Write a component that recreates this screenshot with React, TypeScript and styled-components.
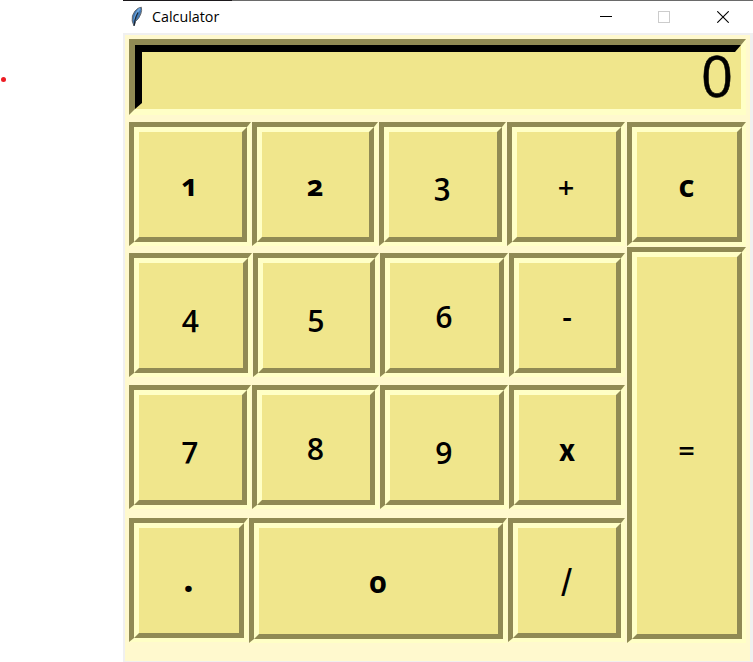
import React from 'react';
import styled, { createGlobalStyle } from 'styled-components';

const FACE = '#f0e68c';
const DARK = '#908a54';
const LIGHT = '#ffffc6';
const SHELL = '#fff9ce';

const GlobalStyle = createGlobalStyle`
  * { box-sizing: border-box; }
  body {
    margin: 0;
    background: #ffffff;
    color: #000000;
    font-family: "Open Sans", "Noto Sans", sans-serif;
    overflow: hidden;
  }
`;

const Page = styled.div`
  display: flex;
  width: 753px;
  height: 662px;
`;

const Margin = styled.div`
  width: 123px;
  padding: 77px 0 0 1px;
`;

const RedDot = styled.div`
  width: 5px;
  height: 5px;
  border-radius: 50%;
  background: #ed1c24;
`;

const Window = styled.div`
  display: flex;
  flex-direction: column;
  width: 630px;
  height: 662px;
`;

const TopEdge = styled.div`
  height: 1px;
  background: linear-gradient(to right, #1b181b 109px, #6a6a6a 109px);
`;

const TitleBar = styled.div`
  display: flex;
  align-items: center;
  height: 32px;
  padding: 0 24px 0 7px;
  background: #ffffff;
`;

const Title = styled.span`
  flex: 1;
  margin-left: 8px;
  font-family: "Open Sans", "Noto Sans", sans-serif;
  font-size: 14.3px;
  line-height: 20px;
`;

const Controls = styled.div`
  display: flex;
  align-items: center;
  gap: 46px;
`;

const Body = styled.div`
  display: flex;
  flex-direction: column;
  height: 629px;
  padding: 4px 4px 0;
  border: solid #f0f0f0;
  border-width: 2px 3px 1px 2px;
  background: ${SHELL};
`;

const Display = styled.div`
  width: 617px;
  height: 76px;
  border: solid;
  border-width: 6px 5px 6px 6px;
  border-color: ${DARK} ${LIGHT} ${LIGHT} ${DARK};
  background: ${FACE};
`;

const DisplayInner = styled.div`
  display: flex;
  justify-content: flex-end;
  height: 64px;
  padding-right: 2px;
  border: solid;
  border-width: 7px 6px 6px 7px;
  border-color: #000000 ${FACE} ${FACE} #000000;
`;

const DisplayValue = styled.span`
  font-size: 56px;
  font-weight: 500;
  line-height: 50px;
  margin-top: -2px;
  -webkit-text-stroke: 0.5px #000000;
`;

const Keypad = styled.div`
  display: flex;
  margin-top: 7px;
`;

const MainKeys = styled.div`
  width: 498px;
`;

const SideKeys = styled.div`
  display: flex;
  flex-direction: column;
  gap: 1px;
`;

const KeyRow = styled.div<{ $height: number }>`
  display: flex;
  align-items: flex-start;
  height: ${(p) => p.$height}px;
`;

const KeyFrame = styled.div<{ $w: number; $h: number; $gap: number }>`
  flex: none;
  width: ${(p) => p.$w}px;
  height: ${(p) => p.$h}px;
  margin-right: ${(p) => p.$gap}px;
  border: solid;
  border-width: 5px 4px 4px 5px;
  border-color: ${DARK} ${LIGHT} ${LIGHT} ${DARK};
`;

const KeyFace = styled.button<{ $size: number; $weight: number; $dx: number; $dy: number; $font: string }>`
  display: flex;
  align-items: center;
  justify-content: center;
  width: 100%;
  height: 100%;
  margin: 0;
  padding: ${(p) => Math.max(0, p.$dy * 2)}px ${(p) => Math.max(0, -p.$dx * 2)}px
    ${(p) => Math.max(0, -p.$dy * 2)}px ${(p) => Math.max(0, p.$dx * 2)}px;
  border: 5px solid;
  border-color: ${LIGHT} ${DARK} ${DARK} ${LIGHT};
  background: ${FACE};
  color: #000000;
  font-family: ${(p) => p.$font}, sans-serif;
  font-size: ${(p) => p.$size}px;
  font-weight: ${(p) => p.$weight};
  font-variant-numeric: oldstyle-nums;
  line-height: 42px;
`;

type KeyProps = {
  label: string;
  w: number;
  h?: number;
  gap?: number;
  size?: number;
  weight?: number;
  font?: string;
  dx?: number;
  dy?: number;
};

function Key({
  label, w, h = 124, gap = 1, size = 30, weight = 600, font = '"Open Sans"', dx = -0.5, dy = 0,
}: KeyProps) {
  return (
    <KeyFrame $w={w} $h={h} $gap={gap}>
      <KeyFace $size={size} $weight={weight} $font={font} $dx={dx} $dy={dy}>{label}</KeyFace>
    </KeyFrame>
  );
}

function Feather() {
  return (
    <svg width="14" height="22" viewBox="0 0 14 22">
      <path d="M4 20 2.200 15Q1.300 9.500 5 5 8 1.500 11.300 1.200 12.200 4 10.800 8 9 13 5.500 15.500Z" fill="#3f78b5" stroke="#66696e" strokeWidth="1" />
      <path d="M10 2.500Q6 6 4.500 14.500" fill="none" stroke="#6fa6dc" strokeWidth="2" />
      <path d="M8 6.500Q6 10 5 14L4.300 19.500" fill="none" stroke="#1b2836" strokeWidth="1.300" />
    </svg>
  );
}

export default function App() {
  return (
    <>
      <GlobalStyle />
      <Page>
        <Margin><RedDot /></Margin>
        <Window>
          <TopEdge />
          <TitleBar>
            <Feather />
            <Title>Calculator</Title>
            <Controls>
              <svg width="12" height="12" viewBox="0 0 12 12" shapeRendering="crispEdges">
                <path d="M0 5.500H12" stroke="#000" />
              </svg>
              <svg width="13" height="12" viewBox="0 0 13 12" shapeRendering="crispEdges">
                <rect x=".5" y=".5" width="11" height="11" fill="none" stroke="#ccc" />
              </svg>
              <svg width="12" height="12" viewBox="0 0 12 12">
                <path d="M.3.300 11.700 11.700M11.700.300.300 11.700" stroke="#000" strokeWidth="1.100" />
              </svg>
            </Controls>
          </TitleBar>
          <Body>
            <Display>
              <DisplayInner>
                <DisplayValue>0</DisplayValue>
              </DisplayInner>
            </Display>
            <Keypad>
              <MainKeys>
                <KeyRow $height={131}>
                  <Key label="1" w={122} weight={700} />
                  <Key label="2" w={126} size={29} weight={700} />
                  <Key label="3" w={127} dy={-1} />
                  <Key label="+" w={118} dy={2} size={29} />
                </KeyRow>
                <KeyRow $height={132}>
                  <Key label="4" w={123} />
                  <Key label="5" w={126} />
                  <Key label="6" w={128} dy={1} />
                  <Key label="-" w={116} dy={1} />
                </KeyRow>
                <KeyRow $height={133}>
                  <Key label="7" w={122} />
                  <Key label="8" w={127} dy={1} />
                  <Key label="9" w={128} />
                  <Key label="x" w={116} font="Carlito" size={35} weight={700} dy={1} />
                </KeyRow>
                <KeyRow $height={125}>
                  <Key label="." w={119} size={38} weight={700} dy={-4} />
                  <Key label="0" w={258} h={125} weight={700} dy={1} />
                  <Key label="/" w={117} font='"Liberation Sans"' size={38} weight={400} dy={2} />
                </KeyRow>
              </MainKeys>
              <SideKeys>
                <Key label="c" w={119} gap={0} size={31} weight={700} />
                <Key label="=" w={119} h={396} gap={0} dy={4} size={29} />
              </SideKeys>
            </Keypad>
          </Body>
        </Window>
      </Page>
    </>
  );
}
